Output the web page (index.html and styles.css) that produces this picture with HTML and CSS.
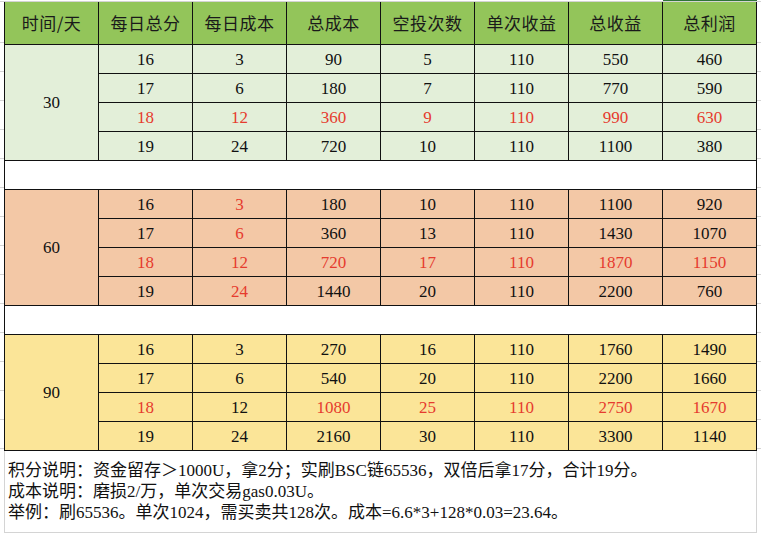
FILE: index.html
```html
<!DOCTYPE html>
<html lang="zh">
<head>
<meta charset="utf-8">
<title>收益表</title>
<link rel="stylesheet" href="styles.css">
</head>
<body>
<div class="sheet">
  <div class="grid">
    <table class="t">
      <colgroup>
        <col class="c"><col class="c"><col class="c"><col class="c"><col class="c"><col class="c"><col class="c"><col class="c">
      </colgroup>
      <thead>
        <tr class="hd">
          <th>时间/天</th><th>每日总分</th><th>每日成本</th><th>总成本</th><th>空投次数</th><th>单次收益</th><th>总收益</th><th class="sel">总利润</th>
        </tr>
      </thead>
      <tbody class="g1">
        <tr><td rowspan="4">30</td><td>16</td><td>3</td><td>90</td><td>5</td><td>110</td><td>550</td><td>460</td></tr>
        <tr><td>17</td><td>6</td><td>180</td><td>7</td><td>110</td><td>770</td><td>590</td></tr>
        <tr class="red"><td>18</td><td>12</td><td>360</td><td>9</td><td>110</td><td>990</td><td>630</td></tr>
        <tr><td>19</td><td>24</td><td>720</td><td>10</td><td>110</td><td>1100</td><td>380</td></tr>
        <tr class="sp"><td colspan="8"></td></tr>
      </tbody>
      <tbody class="g2">
        <tr><td rowspan="4">60</td><td>16</td><td class="r">3</td><td>180</td><td>10</td><td>110</td><td>1100</td><td>920</td></tr>
        <tr><td>17</td><td class="r">6</td><td>360</td><td>13</td><td>110</td><td>1430</td><td>1070</td></tr>
        <tr class="red"><td>18</td><td>12</td><td>720</td><td>17</td><td>110</td><td>1870</td><td>1150</td></tr>
        <tr><td>19</td><td class="r">24</td><td>1440</td><td>20</td><td>110</td><td>2200</td><td>760</td></tr>
        <tr class="sp"><td colspan="8"></td></tr>
      </tbody>
      <tbody class="g3">
        <tr><td rowspan="4">90</td><td>16</td><td>3</td><td>270</td><td>16</td><td>110</td><td>1760</td><td>1490</td></tr>
        <tr><td>17</td><td>6</td><td>540</td><td>20</td><td>110</td><td>2200</td><td>1660</td></tr>
        <tr class="red"><td>18</td><td class="k">12</td><td>1080</td><td>25</td><td>110</td><td>2750</td><td>1670</td></tr>
        <tr><td>19</td><td>24</td><td>2160</td><td>30</td><td>110</td><td>3300</td><td>1140</td></tr>
      </tbody>
    </table>
  </div>
  <div class="notes">
    <p>积分说明：资金留存＞1000U，拿2分；实刷BSC链65536，双倍后拿17分，合计19分。</p>
    <p>成本说明：磨损2/万，单次交易gas0.03U。</p>
    <p>举例：刷65536。单次1024，需买卖共128次。成本=6.6*3+128*0.03=23.64。</p>
  </div>
</div>
</body>
</html>
```

FILE: styles.css
```css
html, body {
  margin: 0;
  padding: 0;
  background: #ffffff;
}

body {
  width: 761px;
  height: 534px;
  overflow: hidden;
  font-family: "Liberation Serif", "Noto Sans CJK SC", serif;
  color: #111111;
}

.sheet {
  padding-top: 1px;
}

.grid {
  position: relative;
  border-top: 1px solid #d4d4d4;
  padding: 0 4px;
  background:
    linear-gradient(#ffffff, #ffffff) 0 0 / 100% 40px no-repeat,
    repeating-linear-gradient(to bottom, transparent 0, transparent 28px, #d4d4d4 28px, #d4d4d4 29px) 0 12px / 100% 29px;
}

.t {
  border-collapse: collapse;
  table-layout: fixed;
  width: 753px;
  font-size: 17px;
}

.t .c {
  width: 94px;
}

.t th,
.t td {
  border: 1px solid #111111;
  padding: 0;
  text-align: center;
  vertical-align: middle;
  white-space: nowrap;
  box-sizing: border-box;
}

.t th {
  border-top: none;
  height: 42px;
  background: #93c55a;
  font-family: "Noto Sans CJK SC", sans-serif;
  font-weight: normal;
  font-size: 17px;
  color: #1a1a1a;
  letter-spacing: 0.5px;
}

.t th.sel {
  position: relative;
}

.t th.sel::before {
  content: "";
  position: absolute;
  left: 0;
  right: -1px;
  top: -3px;
  height: 2px;
  background: #2f7437;
}

.t td {
  height: 29px;
  line-height: 20px;
  padding-top: 2px;
}

.g1 td { background: #e3efd9; }
.g2 td { background: #f3c8a6; }
.g3 td { background: #fbe598; }

.t .sp td {
  background: #ffffff;
}

.red td,
.t td.r {
  color: #e63b2e;
}

.red td.k {
  color: #111111;
}

.notes {
  margin: 0 4px;
  height: 81px;
  border-left: 1px solid #d4d4d4;
  border-right: 1px solid #d4d4d4;
  border-bottom: 1px solid #d4d4d4;
  display: flex;
  flex-direction: column;
  justify-content: center;
  padding-left: 3px;
  font-size: 17px;
  line-height: 21px;
  color: #111111;
}

.notes p {
  margin: 0;
}
```
